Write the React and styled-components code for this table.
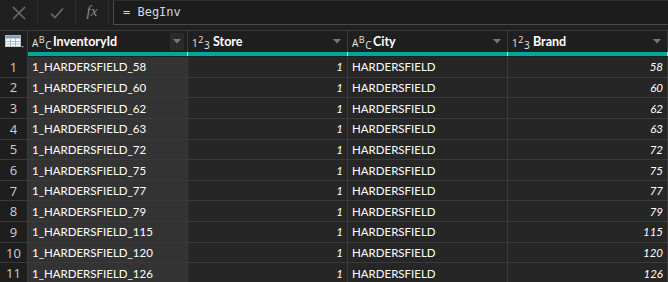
import React from "react";
import styled, { createGlobalStyle } from "styled-components";

const GlobalStyle = createGlobalStyle`
  html, body {
    margin: 0;
    padding: 0;
    background: #202020;
    overflow: hidden;
  }
  body {
    font-family: Lato, "Noto Sans", "Liberation Sans", sans-serif;
    color: #ffffff;
  }
`;

const rows = [58, 60, 62, 63, 72, 75, 77, 79, 115, 120, 126];

const columns = [
  { name: "InventoryId", type: "abc", selected: true },
  { name: "Store", type: "num" },
  { name: "City", type: "abc" },
  { name: "Brand", type: "num" },
];

function App() {
  return (
    <Page>
      <GlobalStyle />
      <Toolbar>
        <ToolButton>
          <svg width="16" height="16" viewBox="0 0 16 16">
            <path d="M2 2 L14 14 M14 2 L2 14" stroke="#6b6b6b" strokeWidth="1.6" fill="none" />
          </svg>
        </ToolButton>
        <ToolButton>
          <svg width="16" height="16" viewBox="0 0 16 16">
            <path d="M2 8.5 L6 12.5 L14 3.5" stroke="#6b6b6b" strokeWidth="1.6" fill="none" />
          </svg>
        </ToolButton>
        <ToolButton $narrow>
          <Fx>fx</Fx>
        </ToolButton>
        <FormulaBox>= BegInv</FormulaBox>
      </Toolbar>
      <Grid>
        <HeaderRow>
          <CornerCell>
            <svg width="20" height="14" viewBox="0 0 20 14">
              <rect x="0.5" y="0.5" width="15" height="11" fill="#ffffff" stroke="#c8c8c8" />
              <rect x="0.5" y="0.5" width="15" height="3" fill="#7f9cc2" />
              <path d="M5.5 3.5 V11.5 M10.5 3.5 V11.5 M0.5 6.5 H15.5 M0.5 9 H15.5" stroke="#9aa7b8" strokeWidth="0.8" />
              <path d="M16 11 L19 11 L17.5 13 Z" fill="#8a8a8a" />
            </svg>
          </CornerCell>
          {columns.map((c) => (
            <HeaderCell key={c.name}>
              <TypeIcon>
                {c.type === "abc" ? (
                  <>
                    A<Sup>B</Sup>
                    <Sub>C</Sub>
                  </>
                ) : (
                  <>
                    1<Sup>2</Sup>
                    <Sub>3</Sub>
                  </>
                )}
              </TypeIcon>
              <HeaderLabel>{c.name}</HeaderLabel>
              <Dropdown $selected={c.selected}>
                <svg width="8" height="5" viewBox="0 0 8 5">
                  <path d="M0 0 H8 L4 4.5 Z" fill="#777777" />
                </svg>
              </Dropdown>
            </HeaderCell>
          ))}
        </HeaderRow>
        <QualityRow>
          <QualityCorner />
          {columns.map((c) => (
            <QualityBar key={c.name} />
          ))}
        </QualityRow>
        {rows.map((brand, i) => (
          <DataRow key={brand}>
            <RowNumber>{i + 1}</RowNumber>
            <Cell $selected>1_HARDERSFIELD_{brand}</Cell>
            <Cell $number>1</Cell>
            <Cell>HARDERSFIELD</Cell>
            <Cell $number>{brand}</Cell>
          </DataRow>
        ))}
      </Grid>
    </Page>
  );
}

export default App;

const Page = styled.div`
  width: 668px;
  height: 282px;
  overflow: hidden;
  background: #202020;
`;

const Toolbar = styled.div`
  display: flex;
  height: 25px;
  margin-bottom: 5px;
`;

const ToolButton = styled.div`
  width: ${(p) => (p.$narrow ? "33px" : "38px")};
  display: flex;
  align-items: center;
  justify-content: center;
  border-right: 1px solid #2e2e2e;
  box-sizing: border-box;
`;

const Fx = styled.span`
  font-family: "Liberation Serif", "DejaVu Serif", serif;
  font-style: italic;
  font-size: 15px;
  color: #8a8a8a;
  margin-top: -3px;
`;

const FormulaBox = styled.div`
  flex: 1;
  margin-left: 4px;
  border-left: 1px solid #4a4a4a;
  border-bottom: 1px solid #4a4a4a;
  border-top: 1px solid #2c2c2c;
  background: #1c1c1c;
  font-family: "DejaVu Sans Mono", "Liberation Mono", monospace;
  font-size: 12px;
  color: #cfd8e0;
  padding-left: 9px;
  line-height: 22px;
`;

const Grid = styled.div`
  display: flex;
  flex-direction: column;
  border-top: 1px solid #3a3a3a;
`;

const rowGrid = `
  display: grid;
  grid-template-columns: 28px 160px 160px 160px 160px;
  column-gap: 0;
`;

const HeaderRow = styled.div`
  ${rowGrid}
  height: 21px;
  background: #1f1f1f;
`;

const CornerCell = styled.div`
  display: flex;
  align-items: center;
  padding-left: 5px;
  border-right: 1px solid #3a3a3a;
`;

const HeaderCell = styled.div`
  display: flex;
  align-items: center;
  padding-left: 4px;
  border-right: 1px solid #3a3a3a;
  font-size: 12px;
`;

const TypeIcon = styled.span`
  display: inline-flex;
  align-items: baseline;
  font-family: "Open Sans", "Noto Sans", sans-serif;
  font-size: 10px;
  color: #e8e8e8;
  width: 21px;
  line-height: 1;
  margin-top: 2px;
`;

const Sup = styled.span`
  position: relative;
  top: -4px;
  font-size: 9px;
  margin-left: 0.5px;
`;

const Sub = styled.span`
  position: relative;
  top: 2px;
  font-size: 10px;
  margin-left: 0.5px;
`;

const HeaderLabel = styled.span`
  flex: 1;
  font-weight: 700;
  color: #ffffff;
  font-size: 12.5px;
`;

const Dropdown = styled.span`
  width: 14px;
  height: 17px;
  margin-right: 3px;
  display: flex;
  align-items: center;
  justify-content: center;
  background: ${(p) => (p.$selected ? "#2b2b2b" : "transparent")};
`;

const QualityRow = styled.div`
  ${rowGrid}
  height: 5px;
  background: #1f1f1f;
`;

const QualityCorner = styled.div`
  border-right: 1px solid #3a3a3a;
`;

const QualityBar = styled.div`
  background: #01a99b;
  border-right: 1px solid #d0d0d0;
  height: 4px;
`;

const DataRow = styled.div`
  ${rowGrid}
  height: 20.65px;
  box-sizing: border-box;
  border-bottom: 1px solid #3a3a3a;
`;

const RowNumber = styled.div`
  background: #1e1e1e;
  color: #cfcfcf;
  font-family: "Open Sans", "Noto Sans", sans-serif;
  font-size: 13px;
  display: flex;
  align-items: center;
  justify-content: center;
  border-right: 1px solid #3a3a3a;
`;

const Cell = styled.div`
  background: ${(p) => (p.$selected ? "#333333" : "#262626")};
  font-size: 11.5px;
  font-style: ${(p) => (p.$number ? "italic" : "normal")};
  display: flex;
  align-items: center;
  justify-content: ${(p) => (p.$number ? "flex-end" : "flex-start")};
  padding: 0 4px;
  border-right: 1px solid #3a3a3a;
  white-space: nowrap;
  overflow: hidden;
`;
